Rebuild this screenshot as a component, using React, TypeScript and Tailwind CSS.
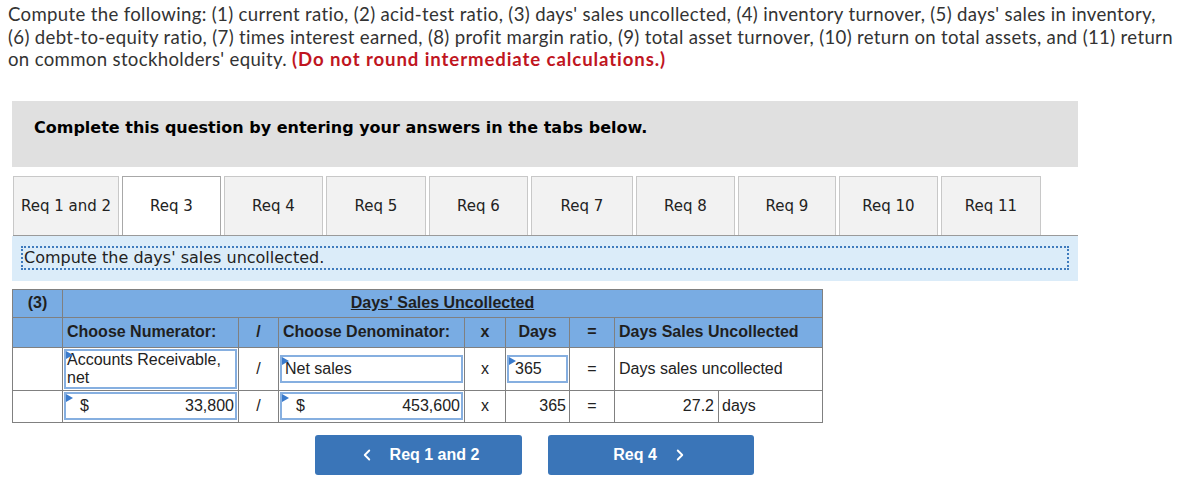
import { ChevronLeft, ChevronRight } from 'lucide-react';

const tabs = [
  { label: 'Req 1 and 2', w: 'w-[106px]' },
  { label: 'Req 3', w: 'w-[99px]', active: true },
  { label: 'Req 4', w: 'w-[99px]' },
  { label: 'Req 5', w: 'w-[100px]' },
  { label: 'Req 6', w: 'w-[99px]' },
  { label: 'Req 7', w: 'w-[102px]' },
  { label: 'Req 8', w: 'w-[99px]' },
  { label: 'Req 9', w: 'w-[98px]' },
  { label: 'Req 10', w: 'w-[99px]' },
  { label: 'Req 11', w: 'w-[100px]' },
];

const Corner = () => (
  <span className="absolute left-0 top-0 h-0 w-0 border-t-[4px] border-b-[4px] border-l-[7px] border-t-transparent border-b-transparent border-l-[#3b7bcc]" />
);

const InputBox = ({ children, className = '' }: { children: React.ReactNode; className?: string }) => (
  <div className={`relative h-full border-2 border-[#86afe0] bg-white ${className}`}>
    <Corner />
    {children}
  </div>
);

const App = () => {
  const cell = 'border border-[#808080] p-0';
  const head = 'border border-[#808080] bg-[#79ace3] font-bold text-[#1f1f1f]';

  return (
    <div className="relative h-[492px] w-[1183px] overflow-hidden bg-white">
      <p className="whitespace-nowrap pl-2 pt-[3px] font-['Lato',sans-serif] text-[18.6px] leading-[22.6px] tracking-[0.33px] text-[#333]">
        Compute the following: (1) current ratio, (2) acid-test ratio, (3) days' sales uncollected, (4) inventory turnover, (5) days' sales in inventory,
        <br />
        (6) debt-to-equity ratio, (7) times interest earned, (8) profit margin ratio, (9) total asset turnover, (10) return on total assets, and (11) return
        <br />
        on common stockholders' equity.{' '}
        <span className="font-bold tracking-[0.9px] text-[#c0161f]">(Do not round intermediate calculations.)</span>
      </p>

      <div className="ml-3 mt-[30px] h-[66px] w-[1066px] bg-[#e0e0e0] pl-[22px] pt-[14px]">
        <span className="font-['DejaVu_Sans',sans-serif] text-[16px] font-bold text-black">
          Complete this question by entering your answers in the tabs below.
        </span>
      </div>

      <div className="ml-[13px] mt-[9px] flex h-[60px] w-[1065px] gap-[3px] border-b border-[#9a9a9a]">
        {tabs.map((t) => (
          <div
            key={t.label}
            className={`${t.w} flex items-center justify-center border border-b-0 font-['DejaVu_Sans',sans-serif] text-[15px] text-[#222] ${
              t.active ? 'border-[#a8a8a8] bg-white' : 'border-[#c8c8c8] bg-[#f2f2f2]'
            }`}
          >
            {t.label}
          </div>
        ))}
      </div>

      <div className="ml-3 h-[45px] w-[1066px] bg-[#dbecf9] pl-[9px] pt-[10px]">
        <div className="flex h-[24px] w-[1048px] items-center border-2 border-dotted border-[#3f7bbd] pl-[1px] font-['DejaVu_Sans',sans-serif] text-[16px] text-[#222]">
          Compute the days' sales uncollected.
        </div>
      </div>

      <table className="ml-3 mt-2 border-collapse font-['Liberation_Sans',Arial,sans-serif] text-[16px] text-[#222]">
        <colgroup>
          <col className="w-[50px]" />
          <col className="w-[176px]" />
          <col className="w-[40px]" />
          <col className="w-[186px]" />
          <col className="w-[41px]" />
          <col className="w-[64px]" />
          <col className="w-[45px]" />
          <col className="w-[104px]" />
          <col className="w-[104px]" />
        </colgroup>
        <tbody>
          <tr className="h-[28px]">
            <td className={`${head} text-center`}>(3)</td>
            <td colSpan={8} className={`${head} text-center`}>
              <span className="underline">Days' Sales Uncollected</span>
            </td>
          </tr>
          <tr className="h-[30px]">
            <td className={head}></td>
            <td className={`${head} pl-1`}>Choose Numerator:</td>
            <td className={`${head} text-center`}>/</td>
            <td className={`${head} pl-1`}>Choose Denominator:</td>
            <td className={`${head} text-center`}>x</td>
            <td className={`${head} text-center`}>Days</td>
            <td className={`${head} text-center`}>=</td>
            <td colSpan={2} className={`${head} pl-1`}>Days Sales Uncollected</td>
          </tr>
          <tr className="h-[42px]">
            <td className={cell}></td>
            <td className={`${cell} p-[1px]`}>
              <InputBox className="h-[38px] pl-[1px] text-[16px] leading-[18px]">Accounts Receivable, net</InputBox>
            </td>
            <td className={`${cell} text-center`}>/</td>
            <td className={`${cell} p-[1px]`}>
              <InputBox className="flex h-[38px] items-center pl-[3px]">Net sales</InputBox>
            </td>
            <td className={`${cell} text-center`}>x</td>
            <td className={`${cell} p-[1px]`}>
              <InputBox className="flex h-[38px] items-center pl-[6px]">365</InputBox>
            </td>
            <td className={`${cell} text-center`}>=</td>
            <td colSpan={2} className={`${cell} pl-1`}>Days sales uncollected</td>
          </tr>
          <tr className="h-[32px]">
            <td className={cell}></td>
            <td className={`${cell} p-[1px]`}>
              <InputBox className="flex h-[28px] items-center justify-between pl-[14px] pr-[1px]">
                <span>$</span>
                <span>33,800</span>
              </InputBox>
            </td>
            <td className={`${cell} text-center`}>/</td>
            <td className={`${cell} p-[1px]`}>
              <InputBox className="flex h-[28px] items-center justify-between pl-[14px] pr-[1px]">
                <span>$</span>
                <span>453,600</span>
              </InputBox>
            </td>
            <td className={`${cell} text-center`}>x</td>
            <td className={`${cell} pr-[3px] text-right`}>365</td>
            <td className={`${cell} text-center`}>=</td>
            <td className={`${cell} pr-[4px] text-right`}>27.2</td>
            <td className={`${cell} pl-[3px]`}>days</td>
          </tr>
        </tbody>
      </table>

      <div className="ml-[315px] mt-[12px] flex gap-[26px] font-['Liberation_Sans',Arial,sans-serif] text-[16px] font-bold text-white">
        <button className="flex h-[40px] w-[207px] items-center justify-center gap-[14px] rounded-[3px] bg-[#3a75b8]">
          <ChevronLeft size={18} strokeWidth={2.5} />
          <span>Req 1 and 2</span>
        </button>
        <button className="flex h-[40px] w-[206px] items-center justify-center gap-[14px] rounded-[3px] bg-[#3a75b8]">
          <span>Req 4</span>
          <ChevronRight size={18} strokeWidth={2.5} />
        </button>
      </div>
    </div>
  );
};

export default App;
